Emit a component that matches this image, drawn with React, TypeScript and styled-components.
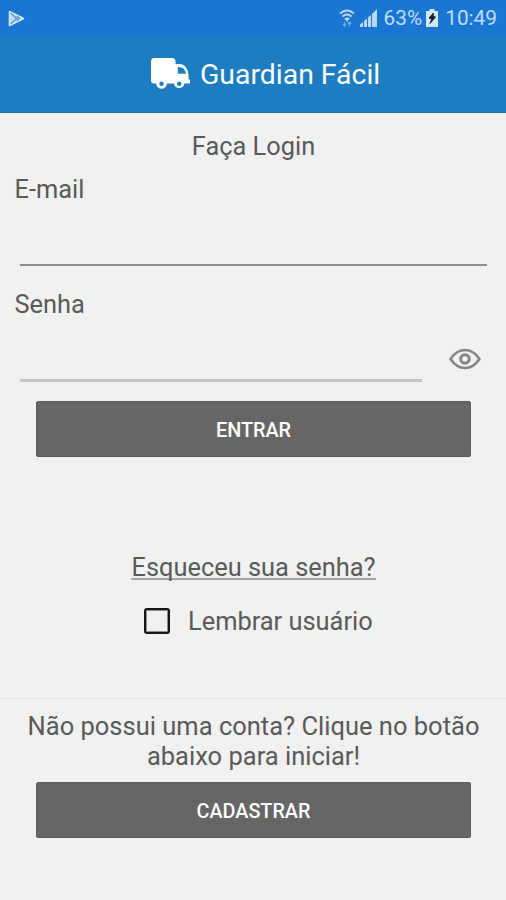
import React, { useState } from "react";
import styled, { createGlobalStyle } from "styled-components";

const GlobalStyle = createGlobalStyle`
  * { box-sizing: border-box; }
  body { margin: 0; background: #f1f1f1; font-family: Roboto, sans-serif; }
`;

const Screen = styled.div`
  display: flex;
  flex-direction: column;
  width: 506px;
  height: 900px;
  overflow: hidden;
  background: #f1f1f1;
  color: #5a5a5a;
`;

const StatusBar = styled.div`
  display: flex;
  align-items: center;
  justify-content: space-between;
  flex: none;
  height: 36px;
  padding: 0 9px 0 8px;
  background: #1976d2;
  color: #c2dcf7;
`;

const StatusGroup = styled.div`
  display: flex;
  align-items: center;
`;

const StatusText = styled.span<{ $gap: number }>`
  margin-left: ${(p) => p.$gap}px;
  font-size: 20.8px;
  line-height: 36px;
`;

const StatusIcon = styled.svg<{ $gap?: number }>`
  display: block;
  margin-left: ${(p) => p.$gap ?? 0}px;
`;

const AppBar = styled.header`
  display: flex;
  flex: none;
  height: 77px;
  padding: 22px 0 0 150px;
  background: #1c7dc0;
  border-bottom: 1px solid #1871b2;
  color: #fff;
`;

const AppTitle = styled.h1`
  margin: -1px 0 0 10px;
  font-size: 28.4px;
  font-weight: 400;
  line-height: 36px;
  white-space: nowrap;
`;

const Heading = styled.h2`
  margin: 18px 0 0;
  padding-left: 1px;
  font-size: 25.4px;
  font-weight: 400;
  line-height: 30px;
  text-align: center;
`;

const Label = styled.label`
  display: block;
  margin: 13px 0 0 14.5px;
  font-size: 25.4px;
  line-height: 30px;
`;

const Field = styled.div`
  display: flex;
  flex: none;
  height: 72px;
  padding: 0 19px 0 20px;
`;

const Input = styled.input<{ $thick?: boolean }>`
  flex: 1;
  min-width: 0;
  height: ${(p) => (p.$thick ? 63 : 62)}px;
  padding: 0;
  border: 0;
  border-bottom: ${(p) => (p.$thick ? "3px solid #c5c5c5" : "2px solid #8e8e8e")};
  outline: 0;
  background: transparent;
  color: #333;
  font: 25.4px Roboto, sans-serif;
`;

const EyeButton = styled.button`
  display: flex;
  align-items: flex-start;
  flex: none;
  width: 65px;
  height: 62px;
  padding: 29px 0 0 27px;
  border: 0;
  background: none;
`;

const Button = styled.button<{ $top: number }>`
  flex: none;
  width: 435px;
  height: 56px;
  margin: ${(p) => p.$top}px 0 0 36px;
  padding: 2px 0 0;
  border: 1px solid #5c5c5c;
  border-radius: 2px;
  background: #666;
  color: #fff;
  font: 500 19.8px/54px Roboto, sans-serif;
`;

const ForgotLink = styled.a`
  align-self: center;
  margin: 96px 0 0 1px;
  border-bottom: 2px solid #a5a5a5;
  font-size: 25.4px;
  line-height: 28px;
  height: 27px;
  white-space: nowrap;
`;

const Remember = styled.label`
  display: flex;
  align-items: center;
  height: 30px;
  margin: 26px 0 0 144px;
  font-size: 25.4px;
  line-height: 30px;
`;

const CheckBox = styled.input`
  appearance: none;
  width: 26px;
  height: 26px;
  margin: 0 18px 0 0;
  border: 2px solid #161616;
  border-radius: 3px;
  box-shadow: inset 0 0 0 1px #8c8c8c;
`;

const Footer = styled.footer`
  display: flex;
  flex-direction: column;
  margin-top: 62px;
  padding-top: 12px;
  border-top: 1px solid #e2e2e2;
`;

const Prompt = styled.p`
  margin: 0;
  padding-left: 1px;
  font-size: 25.5px;
  line-height: 30px;
  text-align: center;
  white-space: nowrap;
`;

function TruckIcon() {
  return (
    <svg width="40" height="32" viewBox="0 0 40 32">
      <path
        fill="currentColor"
        fillRule="evenodd"
        d="M4 0H22Q25.500 0 25.500 3.500V6H30Q33.500 6 36 9.500Q38.500 13 38.500 17V21.500H40V25.500H34.300A5.200 5.200 0 0 1 24 25.500H16.800A5.200 5.200 0 0 1 6.300 25.500H4Q1 25.500 1 22.500V3.500Q1 0 4 0ZM27.800 9V15.800H36Q35.500 12.500 33.500 10.500Q31.500 9 27.800 9ZM11.500 23.600A2.200 2.200 0 1 0 11.500 28A2.200 2.200 0 1 0 11.500 23.600ZM29.200 23.600A2.200 2.200 0 1 0 29.200 28A2.200 2.200 0 1 0 29.200 23.600Z"
      />
    </svg>
  );
}

function EyeIcon() {
  return (
    <svg width="32" height="22" viewBox="0 0 32 22" fill="none" stroke="#858585">
      <path strokeWidth="2.500" d="M1.500 11C5.500 5 10 2 16 2S26.500 5 30.500 11C26.500 17 22 20 16 20S5.500 17 1.500 11Z" />
      <circle cx="16" cy="11" r="4.300" strokeWidth="3" />
    </svg>
  );
}

export default function App() {
  const [remember, setRemember] = useState(false);
  const [visible, setVisible] = useState(false);
  return (
    <Screen>
      <GlobalStyle />
      <StatusBar>
        <StatusIcon width="17" height="17" viewBox="0 0 17 17">
          <path d="M1.500 1.500L15.500 8.500L1.500 15.500Z" fill="#b7daf7" stroke="#d6ebfd" strokeWidth="1.500" strokeLinejoin="round" />
          <path d="M2.500 3L9 8.500L2.500 14M9 6L11.500 8.500L9 11" fill="none" stroke="#538fc9" strokeWidth="1.200" />
        </StatusIcon>
        <StatusGroup>
          <StatusIcon width="16" height="18" viewBox="0 0 16 18" fill="none" stroke="#b9d9f6" strokeWidth="1.800">
            <path d="M1 4.500Q8-1.500 15 4.500M3.500 7.500Q8 3.500 12.500 7.500M5.800 10.300Q8 8.500 10.200 10.300" />
            <path d="M8 10V12.500" />
            <path d="M5.500 17V13M4 15L5.500 17L7 15M10.500 13V17M9 15L10.500 13L12 15" stroke="#75afe8" strokeWidth="1.200" />
          </StatusIcon>
          <StatusIcon $gap={5} width="18" height="18" viewBox="0 0 18 18" fill="#b9d9f6">
            <path d="M0 18V15.500L3 13V18ZM4 18V12L7 9.500V18ZM8 18V8.500L11 6V18ZM12 18V5L17 0V18Z" />
          </StatusIcon>
          <StatusText $gap={6}>63%</StatusText>
          <StatusIcon $gap={4} width="12" height="18" viewBox="0 0 12 18">
            <path d="M0 2H3.500V0H8.500V2H12V18H0Z" fill="#d3e7fa" />
            <path d="M7.500 4L3 9L5.800 10L4 14.500L9.500 8L7 7Z" fill="#152331" stroke="#152331" />
          </StatusIcon>
          <StatusText $gap={7}>10:49</StatusText>
        </StatusGroup>
      </StatusBar>
      <AppBar>
        <TruckIcon />
        <AppTitle>Guardian Fácil</AppTitle>
      </AppBar>
      <Heading>Faça Login</Heading>
      <Label htmlFor="email">E-mail</Label>
      <Field>
        <Input id="email" type="email" />
      </Field>
      <Label htmlFor="password">Senha</Label>
      <Field>
        <Input id="password" type={visible ? "text" : "password"} $thick />
        <EyeButton type="button" onClick={() => setVisible(!visible)}>
          <EyeIcon />
        </EyeButton>
      </Field>
      <Button $top={10}>ENTRAR</Button>
      <ForgotLink>Esqueceu sua senha?</ForgotLink>
      <Remember>
        <CheckBox type="checkbox" checked={remember} onChange={() => setRemember(!remember)} />
        Lembrar usuário
      </Remember>
      <Footer>
        <Prompt>
          Não possui uma conta? Clique no botão
          <br />
          abaixo para iniciar!
        </Prompt>
        <Button $top={11}>CADASTRAR</Button>
      </Footer>
    </Screen>
  );
}
